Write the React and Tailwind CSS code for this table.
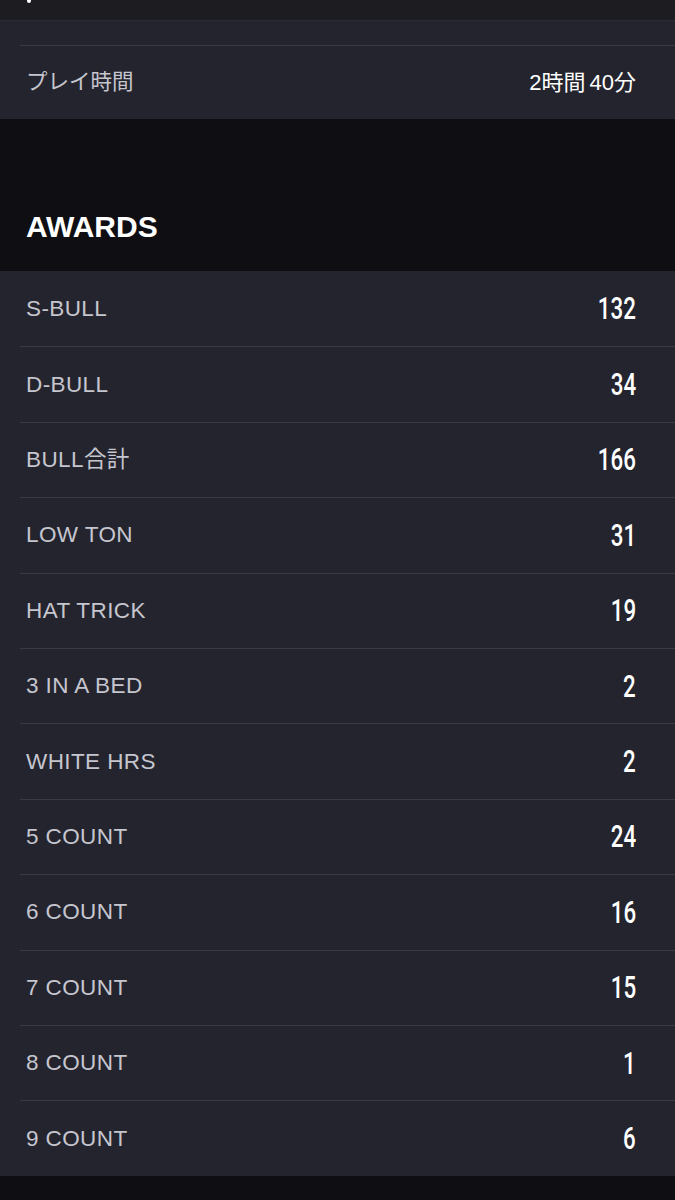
import React from "react";

const awards = [
  ["S-BULL", "132"],
  ["D-BULL", "34"],
  ["BULL合計", "166"],
  ["LOW TON", "31"],
  ["HAT TRICK", "19"],
  ["3 IN A BED", "2"],
  ["WHITE HRS", "2"],
  ["5 COUNT", "24"],
  ["6 COUNT", "16"],
  ["7 COUNT", "15"],
  ["8 COUNT", "1"],
  ["9 COUNT", "6"],
];

const font = "font-['Liberation_Sans','Noto_Sans_CJK_JP',sans-serif]";

function Num({ children }) {
  return (
    <span className="inline-block origin-right scale-x-[0.72] text-[31px] font-medium leading-none text-white font-['Roboto',sans-serif]">
      {children}
    </span>
  );
}

export default function App() {
  return (
    <div className={`min-h-[1200px] w-[675px] bg-[#0e0e13] ${font}`}>
      {/* top bar remnant */}
      <div className="h-[20px] bg-[#1c1c21] pl-[27px]">
        <div className="h-[3px] w-[4px] rounded-b-full bg-white" />
      </div>

      {/* summary rows */}
      <div className="bg-[#24242e] border-t border-[#2b2b35]">
        <div className="h-[24px]" />
        <div className="ml-[20px] flex h-[74px] items-center justify-between border-t border-[#3a3a46] pl-[6px] pr-[39px]">
          <span className="text-[21.5px] text-[#c6c6ce]">プレイ時間</span>
          <span className="flex items-baseline gap-[4px] text-[22px] text-white">
            <span>2時間</span>
            <span>40分</span>
          </span>
        </div>
      </div>

      {/* awards header */}
      <div className="flex h-[152px] items-end pb-[29px] pl-[26px]">
        <h2 className="text-[30px] font-bold leading-none text-white">AWARDS</h2>
      </div>

      {/* awards list */}
      <div className="bg-[#24242e]">
        {awards.map(([label, value], i) => (
          <div
            key={label}
            className={`ml-[20px] flex h-[75.4px] items-center justify-between pl-[6px] pr-[39px] ${
              i > 0 ? "border-t border-[#3a3a46]" : ""
            }`}
          >
            <span className="text-[22.5px] tracking-[0.4px] text-[#c6c6ce]">{label}</span>
            <Num>{value}</Num>
          </div>
        ))}
      </div>
    </div>
  );
}
